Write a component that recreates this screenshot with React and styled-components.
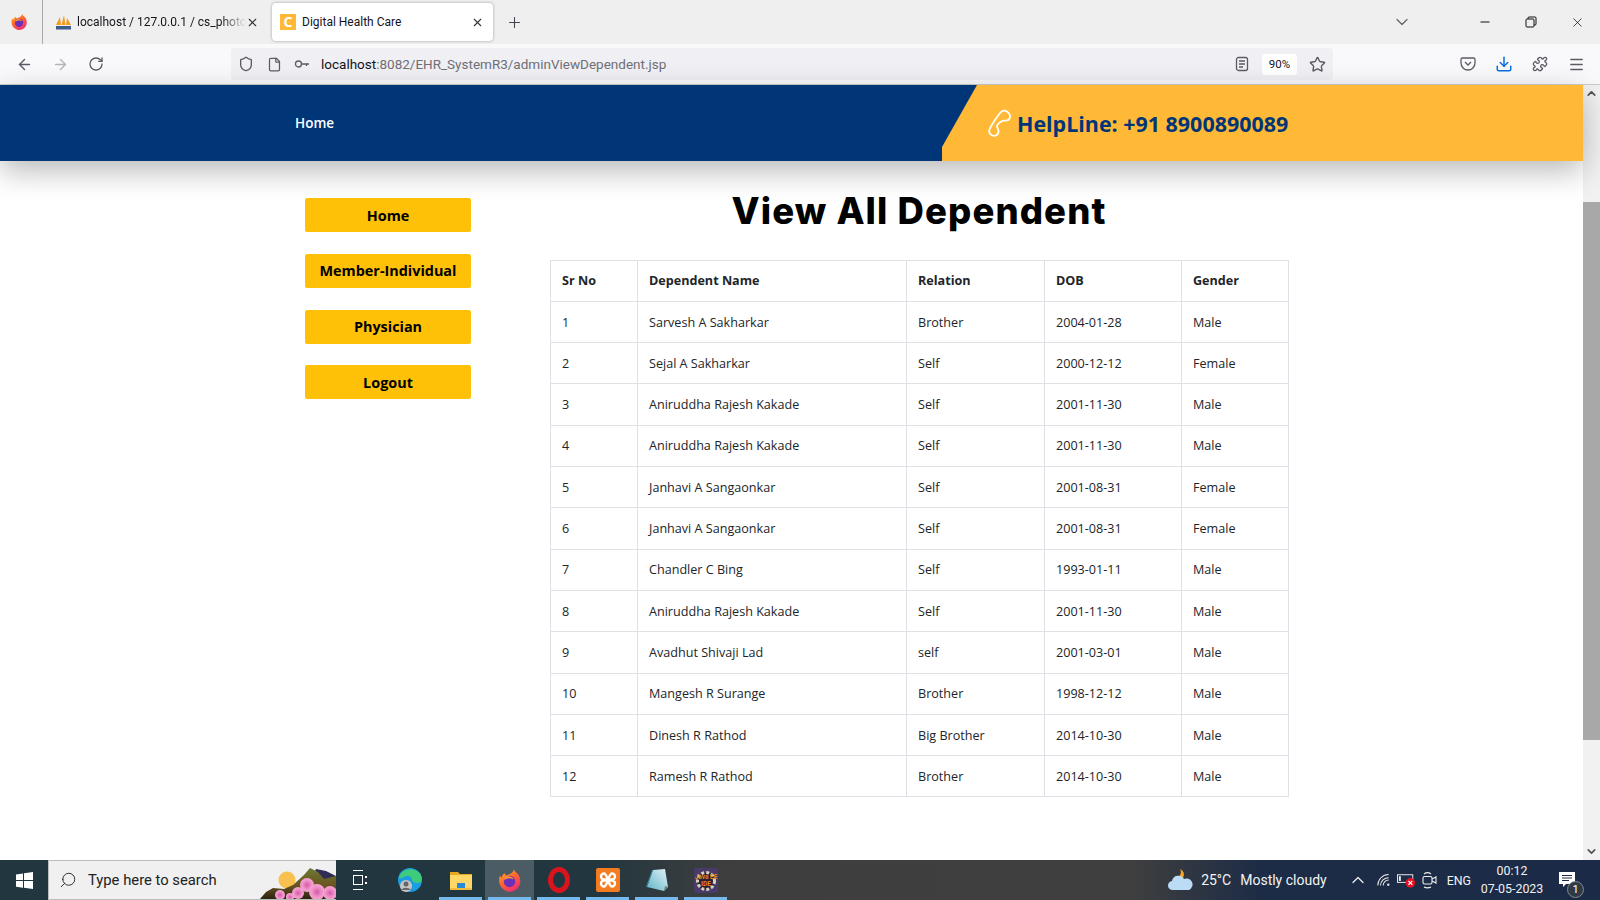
import React from "react";
import styled, { createGlobalStyle } from "styled-components";
import { ArrowLeft, ArrowRight, RotateCw, Shield, File, Star, Download, Puzzle, Menu, X, Plus, ChevronDown, ChevronUp, Minus, Search } from "lucide-react";

const Global = createGlobalStyle`
  html, body { margin: 0; padding: 0; height: 100%; overflow: hidden; background: #fff; }
  * { box-sizing: border-box; }
  body { font-family: "Open Sans", "Liberation Sans", sans-serif; }
`;

const Screen = styled.div`width: 1600px; height: 900px; display: flex; flex-direction: column; overflow: hidden;`;

const TabStrip = styled.div`height: 44px; background: #efefef; display: flex; align-items: center; flex: none; font-family: Roboto, sans-serif;`;
const AppSlot = styled.div`width: 43px; height: 44px; border-right: 1px solid #a9a9a9; display: flex; align-items: center; justify-content: center; padding-right: 4px;`;
const Tab = styled.div`
  width: ${p => p.$w}px; height: 38px; display: flex; align-items: center; gap: ${p => p.$gap ?? 6}px;
  margin-left: ${p => p.$ml || 0}px; padding: 0 ${p => p.$pr || 10}px 0 ${p => p.$pl || 8}px; border-radius: 4px;
  background: ${p => p.$active ? "#fff" : "transparent"};
  box-shadow: ${p => p.$active ? "0 0 3px rgba(0,0,0,.35)" : "none"};
`;
const TabTitle = styled.span`
  flex: 1; min-width: 0; white-space: nowrap; overflow: hidden; font-size: 12px; color: #15141a;
  margin-left: ${p => p.$ml || 0}px;
  ${p => p.$fade && "mask-image: linear-gradient(90deg,#000 85%,transparent 100%);"}
`;
const StripButton = styled.div`display: flex; align-items: center; justify-content: center; color: ${p => p.$c || "#45454d"}; margin-left: ${p => p.$ml || 0}px; width: ${p => p.$w || 24}px;`;
const Favicon = styled.div`width: 16px; height: 16px; background: #ffb936; color: #fff; font: 700 14px/16px "Open Sans", sans-serif; text-align: center; flex: none;`;

const Toolbar = styled.div`height: 41px; background: #f9f9fb; border-bottom: 1px solid #ccc; display: flex; align-items: center; padding: 0 6px; flex: none; font-family: Roboto, sans-serif;`;
const ToolSlot = styled.div`width: ${p => p.$w || 36}px; height: 32px; display: flex; align-items: center; justify-content: center; color: ${p => p.$c || "#5b5b66"}; flex: none;`;
const UrlBar = styled.div`width: 1102px; height: 32px; margin-left: 117px; background: #f0f0f4; border-radius: 4px; display: flex; align-items: center; padding: 0 1px; flex: none;`;
const UrlText = styled.span`margin-left: 5px; font-size: 13.5px; color: #15141a; white-space: nowrap;`;
const UrlRest = styled.span`color: #6f6f76;`;
const Zoom = styled.div`width: 35px; height: 21px; background: #fff; border-radius: 3px; display: flex; align-items: center; justify-content: center; font-size: 11.5px; color: #15141a; margin: 0 5px 0 8px;`;
const Spacer = styled.div`flex: 1;`;

const Viewport = styled.div`flex: 1; min-height: 0; display: flex; background: #fff;`;
const Page = styled.div`flex: 1; min-width: 0; display: flex; flex-direction: column;`;
const Header = styled.header`height: 76px; background: #003578; display: flex; align-items: center; justify-content: space-between; padding-left: 295px; box-shadow: 0 10px 30px rgba(0,0,0,.28); position: relative; flex: none;`;
const NavLink = styled.a`color: #fff; font-size: 13.5px; font-weight: 600;`;
const HelpPanel = styled.div`
  width: 641px; height: 76px; background: #ffb936; display: flex; align-items: center; gap: 6px; padding-left: 45px;
  clip-path: polygon(35px 0, 100% 0, 100% 100%, 0 100%, 0 62px);
`;
const HelpText = styled.span`font-size: 21.45px; font-weight: 700; color: #003578; white-space: nowrap;`;

const Content = styled.div`flex: 1; display: flex; padding: 37px 0 0 305px; gap: 79px;`;
const Sidebar = styled.nav`width: 166px; display: flex; flex-direction: column; gap: 21.8px; flex: none;`;
const SideButton = styled.a`height: 34px; border-radius: 2px; background: #ffc107; color: #000; font-size: 14.4px; font-weight: 700; display: flex; align-items: center; justify-content: center; white-space: nowrap;`;
const Main = styled.main`width: 738px; flex: none;`;
const Title = styled.h1`margin: -10px 0 24.6px; font-family: Inter, "Open Sans", sans-serif; font-size: 36.5px; line-height: 47px; font-weight: 800; color: #000; text-align: center; letter-spacing: 1.1px;`;
const Table = styled.table`width: 738px; border-collapse: collapse; table-layout: fixed; font-size: 12.6px; color: #212529;`;
const Th = styled.th`height: 41.3px; padding: 0 11px; border: 1px solid #dee2e6; text-align: left; font-weight: 700; width: ${p => p.$w}px;`;
const Td = styled.td`height: 41.3px; padding: 0 11px; border: 1px solid #dee2e6;`;

const Scrollbar = styled.div`width: 17px; background: #f1f1f1; display: flex; flex-direction: column; align-items: center; flex: none;`;
const ScrollArrow = styled.div`height: 17px; display: flex; align-items: center; justify-content: center; color: #505050; flex: none;`;
const ScrollThumb = styled.div`width: 17px; height: 538px; margin-top: 100px; background: #a8a8a8; flex: none;`;

const Taskbar = styled.footer`height: 40px; flex: none; display: flex; align-items: stretch; color: #fff; font-family: Roboto, sans-serif; background: linear-gradient(90deg,#21363f 0,#21363f 590px,#3e3e3e 730px,#3f3f3f 1130px,#1d2c46 1260px,#1b2a46 100%);`;
const StartBtn = styled.div`width: 48px; display: flex; align-items: center; justify-content: center; flex: none;`;
const SearchBox = styled.div`width: 288px; background: #f0f0f0; border: 1px solid #bdbdbd; border-width: 1px 0 1px 1px; display: flex; align-items: center; color: #222; overflow: hidden; flex: none;`;
const SearchGlyph = styled(Search)`margin-left: 10px; transform: scaleX(-1); flex: none;`;
const SearchLabel = styled.span`font-size: 14.8px; margin-left: 11px; white-space: nowrap;`;
const SearchArt = styled.svg`margin-left: auto; flex: none; align-self: flex-end;`;
const TaskSlot = styled.div`
  width: ${p => p.$w || 49}px; display: flex; align-items: center; justify-content: center; flex: none; position: relative;
  background: ${p => p.$active ? "#4b5c64" : "transparent"};
  ${p => p.$open && `&::after { content: ""; position: absolute; left: 3px; right: 3px; bottom: 0; height: 3px; background: #76b9ed; }`}
`;
const Tray = styled.div`margin-left: auto; display: flex; align-items: center; flex: none; padding-right: 16px;`;
const TrayText = styled.span`white-space: nowrap; margin-left: ${p => p.$ml || 0}px; font-size: ${p => p.$s || 14}px; color: #f3f3f3;`;
const TrayIcon = styled.div`width: ${p => p.$w || 24}px; margin-left: ${p => p.$ml || 0}px; display: flex; justify-content: center; align-items: center; flex: none; color: #eee;`;
const Clock = styled.div`width: 76px; margin-left: 3px; text-align: center; font-size: 12.4px; line-height: 18px; color: #f0f0f0; flex: none;`;
const Notify = styled.div`width: 34px; position: relative; display: flex; justify-content: center; flex: none;`;
const NotifyBadge = styled.span`position: absolute; right: 0; top: 9px; width: 17px; height: 17px; border-radius: 50%; background: #2f3a49; border: 1px solid #888; font-size: 11px; line-height: 15px; text-align: center; color: #fff;`;

const FirefoxIcon = ({ s = 18 }) => (
  <svg width={s} height={s} viewBox="0 0 24 24">
    <defs><linearGradient id="ffg" x1="0" y1="0" x2="0.6" y2="1"><stop offset="0" stopColor="#ffbd2e"/><stop offset="0.5" stopColor="#ff6a2b"/><stop offset="1" stopColor="#f0316f"/></linearGradient></defs>
    <path d="M16 1c1 3 3 3 5 6 2 4 2 9-1 12-3 4-9 5-13 2C2 18 1 12 3 7c0 1 1 2 1.500 2C5 7 6 5.500 8 5c-.5 1 0 2 1 2 3-1 7-2 7-6z" fill="url(#ffg)"/>
    <circle cx="12" cy="13" r="5.500" fill="#6b2fb8"/>
    <path d="M7 12c2-2 5-3 9-1-1-2-3-3-5-3-3 0-4 2-4 4z" fill="#ff9a2e"/>
  </svg>
);
const PmaIcon = () => (
  <svg width="17" height="17" viewBox="0 0 17 17">
    <path d="M1 11 5 3l1 8zM6.500 11 9 1l1.500 10zM11 11l1-7 4 7z" fill="#f29b1d"/>
    <rect x="1" y="12" width="15" height="3.500" fill="#3f5d8a"/>
  </svg>
);
const KeyIcon = () => (
  <svg width="16" height="16" viewBox="0 0 16 16" fill="none" stroke="#5b5b66" strokeWidth="1.300"><circle cx="4.500" cy="8" r="3"/><path d="M7.500 8H15M12.500 8v2"/></svg>
);
const ReaderIcon = () => (
  <svg width="16" height="16" viewBox="0 0 16 16" fill="none" stroke="#5b5b66" strokeWidth="1.300"><rect x="2.500" y="1.500" width="11" height="13" rx="2"/><path d="M5 5h6M5 8h6M5 11h4"/></svg>
);
const PocketIcon = () => (
  <svg width="16" height="16" viewBox="0 0 16 16" fill="none" stroke="#5b5b66" strokeWidth="1.300"><path d="M2.500 2h11A1.500 1.500 0 0 1 15 3.500V7A7 7 0 0 1 1 7V3.500A1.500 1.500 0 0 1 2.500 2z"/><path d="M5 6l3 3 3-3"/></svg>
);
const RestoreIcon = () => (
  <svg width="12" height="12" viewBox="0 0 12 12" fill="none" stroke="#111" strokeWidth="1"><rect x="1" y="3" width="8" height="8" rx="1"/><path d="M3 3V2a1 1 0 0 1 1-1h6a1 1 0 0 1 1 1v6a1 1 0 0 1-1 1H9"/></svg>
);
const PhoneIcon = () => (
  <svg width="24" height="28" viewBox="0 0 24 28" fill="none" stroke="#fff" strokeWidth="1.800"><path d="M13 4C15 1.500 18 1 20 2.500C23 4.500 24 8 22 10.500C20 12.500 17 11 15 12C13 13 10.500 15.500 10 17C9.500 18.500 12 20 11.500 23C11 26 8 27.500 5.500 26.500C3 25.500 1.500 23 2.500 20.500C4 17 10 8 13 4Z"/></svg>
);
const WindowsIcon = () => (
  <svg width="17" height="17" viewBox="0 0 17 17" fill="#fff"><path d="M0 2.400 7 1.400v6.700H0zM8 1.300 17 0v8.100H8zM0 9h7v6.700L0 14.700zM8 9h9v8l-9-1.300z"/></svg>
);
const FlowerArt = () => (
  <SearchArt width="78" height="38" viewBox="0 0 78 38">
    <defs>
      <linearGradient id="hill" x1="0" y1="0" x2="0" y2="1"><stop offset="0" stopColor="#6c7a33"/><stop offset="0.55" stopColor="#6b5420"/><stop offset="1" stopColor="#2c2410"/></linearGradient>
      <radialGradient id="petal"><stop offset="0" stopColor="#d45aa6"/><stop offset="0.6" stopColor="#f08fc8"/><stop offset="1" stopColor="#f2a6d2"/></radialGradient>
    </defs>
    <circle cx="29" cy="19" r="8.500" fill="#f7c04f"/>
    <path d="M58 8 68 10 78 15V26H50z" fill="#2f2d55"/>
    <path d="M2 38 8 31 15 27 26 28 35 24 46 14 52 7 60 11 66 18 78 15V38z" fill="url(#hill)"/>
    <g fill="url(#petal)">
      <circle cx="22" cy="34" r="5"/><circle cx="32" cy="36" r="4"/><circle cx="40" cy="32" r="6"/><circle cx="49" cy="24" r="7"/><circle cx="59" cy="31" r="8"/><circle cx="72" cy="32" r="7"/>
    </g>
  </SearchArt>
);
const TaskViewIcon = () => (
  <svg width="16" height="22" viewBox="0 0 16 22" fill="none" stroke="#fff"><path d="M1 1.500h10M1 20.500h10"/><rect x="1.500" y="6.500" width="9" height="9"/><path d="M14 7v2M14 13v2" strokeWidth="2"/></svg>
);
const EdgeIcon = () => (
  <svg width="26" height="26" viewBox="0 0 26 26">
    <circle cx="13" cy="13" r="12" fill="#1b9de2"/>
    <path d="M2 11C4 3 13 0 20 4c4 2 6 7 4 11-3 2-8 1-9-2 0-3-3-5-6-4-3 1-5 3-7 2z" fill="#3ecb7a"/>
    <circle cx="9" cy="19" r="6" fill="#c6c6c6"/><circle cx="9" cy="17" r="2.500" fill="#666"/><path d="M4.500 23c1-3 8-3 9 0z" fill="#666"/>
  </svg>
);
const FolderIcon = () => (
  <svg width="24" height="24" viewBox="0 0 24 24">
    <path d="M1 4h8l2 2h12v3H1z" fill="#e8a91e"/><rect x="1" y="7" width="22" height="15" fill="#ffd766"/>
    <rect x="8" y="15" width="8" height="7" fill="#2a88d8"/><rect x="1" y="20" width="22" height="2" fill="#f0bb3e"/>
  </svg>
);
const OperaIcon = () => (
  <svg width="24" height="26" viewBox="0 0 24 26"><ellipse cx="12" cy="13" rx="8.500" ry="10.500" fill="none" stroke="#d9141e" strokeWidth="5"/></svg>
);
const XamppIcon = () => (
  <svg width="24" height="24" viewBox="0 0 24 24" fill="none"><rect width="24" height="24" rx="2" fill="#f47b20"/><path d="M8 5.500a3 3 0 1 0 0 6h8a3 3 0 1 0 0-6c-2 0-3 4-4 6.500s-2 6.500-4 6.500a3 3 0 1 1 0-6h8a3 3 0 1 1 0 6c-2 0-3-4-4-6.500S10 5.500 8 5.500z" stroke="#fff" strokeWidth="2.400"/></svg>
);
const NoteIcon = () => (
  <svg width="24" height="24" viewBox="0 0 24 24">
    <defs><linearGradient id="pad" x1="0" y1="1" x2="1" y2="0"><stop offset="0" stopColor="#5fb4c8"/><stop offset="1" stopColor="#e4f2f6"/></linearGradient></defs>
    <path d="M8 2 20 1l3 18-4 4-17-4z" fill="url(#pad)"/><path d="M2 19l6-17-1 0-6 17z" fill="#3f8ea6"/><path d="M19 23l4-4-3-1z" fill="#7a7a7a"/>
  </svg>
);
const JeeIcon = () => (
  <svg width="24" height="25" viewBox="0 0 24 25" fontFamily="Roboto, sans-serif" fontWeight="700">
    <rect width="24" height="25" rx="2" fill="#4a3a6a"/>
    <circle cx="12" cy="13" r="8.500" fill="#2a2030" stroke="#d7d0bd" strokeWidth="3" strokeDasharray="3 2"/>
    <text x="12" y="11" fontSize="6.500" textAnchor="middle" fill="#e8821e">Java EE</text>
    <text x="12" y="18" fontSize="6.500" textAnchor="middle" fill="#e8821e">IDE</text>
  </svg>
);
const WeatherIcon = () => (
  <svg width="26" height="24" viewBox="0 0 26 24"><path d="M13 1a6 6 0 0 1-6 9 7 7 0 0 0 9 0 6 6 0 0 0-3-9z" fill="#f6a623"/><path d="M6 22a4.500 4.500 0 0 1-1-9 6.500 6.500 0 0 1 12-2 5.500 5.500 0 0 1 5 11z" fill="#bcdcf5"/></svg>
);
const WifiIcon = () => (
  <svg width="14" height="14" viewBox="0 0 18 16" fill="none" stroke="#eee" strokeWidth="1.300"><path d="M1 15A14 14 0 0 1 15 1M4.500 15A10.500 10.500 0 0 1 15 5M8 15a7 7 0 0 1 7-7"/><circle cx="14.500" cy="14" r="1.500" fill="#eee" stroke="none"/></svg>
);
const BatteryIcon = () => (
  <svg width="22" height="16" viewBox="0 0 22 16"><rect x=".5" y="2.500" width="16" height="8" fill="none" stroke="#eee"/><rect x="2" y="4" width="2" height="5" fill="#eee"/><circle cx="14" cy="11" r="5" fill="#e81123"/><path d="M12 9l4 4M16 9l-4 4" stroke="#fff" strokeWidth="1.200"/></svg>
);
const CamIcon = () => (
  <svg width="18" height="18" viewBox="0 0 18 18" fill="none" stroke="#eee" strokeWidth="1.100"><rect x="2" y="5.500" width="9" height="7.500" rx="1.500"/><path d="M11 8l4-2v6l-4-2M3 3c2-1.500 5-1.500 7 0M3 16c2 1 5 1 7 0"/></svg>
);
const NoteBubble = () => (
  <svg width="17" height="17" viewBox="0 0 17 17"><path d="M0 0h16v12H7l-3 3v-3H0z" fill="#fff"/><path d="M3 3.500h10M3 6h10M3 8.500h7" stroke="#1b2a46"/></svg>
);

const rows = [
  ["1","Sarvesh A Sakharkar","Brother","2004-01-28","Male"],
  ["2","Sejal A Sakharkar","Self","2000-12-12","Female"],
  ["3","Aniruddha Rajesh Kakade","Self","2001-11-30","Male"],
  ["4","Aniruddha Rajesh Kakade","Self","2001-11-30","Male"],
  ["5","Janhavi A Sangaonkar","Self","2001-08-31","Female"],
  ["6","Janhavi A Sangaonkar","Self","2001-08-31","Female"],
  ["7","Chandler C Bing","Self","1993-01-11","Male"],
  ["8","Aniruddha Rajesh Kakade","Self","2001-11-30","Male"],
  ["9","Avadhut Shivaji Lad","self","2001-03-01","Male"],
  ["10","Mangesh R Surange","Brother","1998-12-12","Male"],
  ["11","Dinesh R Rathod","Big Brother","2014-10-30","Male"],
  ["12","Ramesh R Rathod","Brother","2014-10-30","Male"],
];
const cols = [["Sr No",87],["Dependent Name",269],["Relation",138],["DOB",137],["Gender",107]];
const menu = ["Home","Member-Individual","Physician","Logout"];

export default function App() {
  return (
    <Screen>
      <Global />
      <TabStrip>
        <AppSlot><FirefoxIcon /></AppSlot>
        <Tab $w={222} $pl={12} $pr={6} $gap={0}>
          <PmaIcon />
          <TabTitle $fade $ml={5}>localhost / 127.0.0.1 / cs_photography</TabTitle>
          <X size={13} color="#333" />
        </Tab>
        <Tab $active $w={221} $ml={7} $pr={9}>
          <Favicon>C</Favicon>
          <TabTitle>Digital Health Care</TabTitle>
          <X size={13} color="#333" />
        </Tab>
        <StripButton $ml={9}><Plus size={17} strokeWidth={1.5} /></StripButton>
        <StripButton $ml={864} $c="#666"><ChevronDown size={20} strokeWidth={1.5} /></StripButton>
        <StripButton $ml={59} $c="#111"><Minus size={14} /></StripButton>
        <StripButton $ml={22} $c="#111"><RestoreIcon /></StripButton>
        <StripButton $ml={22} $c="#111"><X size={15} strokeWidth={1.2} /></StripButton>
      </TabStrip>
      <Toolbar>
        <ToolSlot><ArrowLeft size={17} /></ToolSlot>
        <ToolSlot $c="#b5b5ba"><ArrowRight size={17} /></ToolSlot>
        <ToolSlot><RotateCw size={16} /></ToolSlot>
        <UrlBar>
          <ToolSlot $w={28}><Shield size={16} /></ToolSlot>
          <ToolSlot $w={28}><File size={15} /></ToolSlot>
          <ToolSlot $w={28}><KeyIcon /></ToolSlot>
          <UrlText>localhost<UrlRest>:8082/EHR_SystemR3/adminViewDependent.jsp</UrlRest></UrlText>
          <Spacer />
          <ToolSlot $w={24}><ReaderIcon /></ToolSlot>
          <Zoom>90%</Zoom>
          <ToolSlot $w={30}><Star size={17} /></ToolSlot>
        </UrlBar>
        <Spacer />
        <ToolSlot><PocketIcon /></ToolSlot>
        <ToolSlot $c="#0a6fe0"><Download size={18} /></ToolSlot>
        <ToolSlot><Puzzle size={16} /></ToolSlot>
        <ToolSlot><Menu size={17} /></ToolSlot>
      </Toolbar>
      <Viewport>
        <Page>
          <Header>
            <NavLink>Home</NavLink>
            <HelpPanel><PhoneIcon /><HelpText>HelpLine: +91 8900890089</HelpText></HelpPanel>
          </Header>
          <Content>
            <Sidebar>{menu.map(m => <SideButton key={m}>{m}</SideButton>)}</Sidebar>
            <Main>
              <Title>View All Dependent</Title>
              <Table>
                <thead><tr>{cols.map(([c, w]) => <Th key={c} $w={w}>{c}</Th>)}</tr></thead>
                <tbody>{rows.map(r => <tr key={r[0]}>{r.map((v, i) => <Td key={i}>{v}</Td>)}</tr>)}</tbody>
              </Table>
            </Main>
          </Content>
        </Page>
        <Scrollbar>
          <ScrollArrow><ChevronUp size={13} strokeWidth={3} /></ScrollArrow>
          <ScrollThumb />
          <Spacer />
          <ScrollArrow><ChevronDown size={13} strokeWidth={3} /></ScrollArrow>
        </Scrollbar>
      </Viewport>
      <Taskbar>
        <StartBtn><WindowsIcon /></StartBtn>
        <SearchBox>
          <SearchGlyph size={18} strokeWidth={1.2} />
          <SearchLabel>Type here to search</SearchLabel>
          <FlowerArt />
        </SearchBox>
        <TaskSlot $w={48}><TaskViewIcon /></TaskSlot>
        <TaskSlot $w={52}><EdgeIcon /></TaskSlot>
        <TaskSlot $open><FolderIcon /></TaskSlot>
        <TaskSlot $active $open><FirefoxIcon s={25} /></TaskSlot>
        <TaskSlot $open><OperaIcon /></TaskSlot>
        <TaskSlot $open><XamppIcon /></TaskSlot>
        <TaskSlot $open><NoteIcon /></TaskSlot>
        <TaskSlot $open><JeeIcon /></TaskSlot>
        <Tray>
          <TrayIcon $w={30}><WeatherIcon /></TrayIcon>
          <TrayText $ml={6}>25°C</TrayText>
          <TrayText $ml={9}>Mostly cloudy</TrayText>
          <TrayIcon $ml={18} $w={26}><ChevronUp size={20} strokeWidth={1.5} /></TrayIcon>
          <TrayIcon $w={26}><WifiIcon /></TrayIcon>
          <TrayIcon $w={21}><BatteryIcon /></TrayIcon>
          <TrayIcon><CamIcon /></TrayIcon>
          <TrayText $ml={5} $s={12.4}>ENG</TrayText>
          <Clock>00:12<br />07-05-2023</Clock>
          <Notify><NoteBubble /><NotifyBadge>1</NotifyBadge></Notify>
        </Tray>
      </Taskbar>
    </Screen>
  );
}
